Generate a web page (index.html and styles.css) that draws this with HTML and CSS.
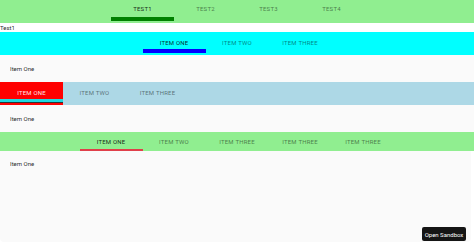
FILE: index.html
```html
<!DOCTYPE html>
<html lang="en">
  <head>
    <meta charset="UTF-8" />
    <meta name="viewport" content="width=device-width, initial-scale=1.0" />
    <title>Tabs</title>
    <link rel="stylesheet" href="styles.css">
  </head>
  <body>
    <div class="bar bar-one">
      <div class="tab selected"><span class="label">Test1</span><span class="indicator"></span></div>
      <div class="tab"><span class="label">Test2</span><span class="indicator"></span></div>
      <div class="tab"><span class="label">Test3</span><span class="indicator"></span></div>
      <div class="tab"><span class="label">Test4</span><span class="indicator"></span></div>
    </div>
    <p class="caption">Test1</p>

    <div class="bar bar-two">
      <div class="tab selected"><span class="label">Item One</span><span class="indicator"></span></div>
      <div class="tab"><span class="label">Item Two</span><span class="indicator"></span></div>
      <div class="tab"><span class="label">Item Three</span><span class="indicator"></span></div>
    </div>
    <div class="panel">Item One</div>

    <div class="bar bar-three">
      <div class="tab selected"><span class="label">Item One</span><span class="indicator"></span></div>
      <div class="tab"><span class="label">Item Two</span><span class="indicator"></span></div>
      <div class="tab"><span class="label">Item Three</span><span class="indicator"></span></div>
    </div>
    <div class="panel">Item One</div>

    <div class="bar bar-four">
      <div class="tab selected"><span class="label">Item One</span><span class="indicator"></span></div>
      <div class="tab"><span class="label">Item Two</span><span class="indicator"></span></div>
      <div class="tab"><span class="label">Item Three</span><span class="indicator"></span></div>
      <div class="tab"><span class="label">Item Three</span><span class="indicator"></span></div>
      <div class="tab"><span class="label">Item Three</span><span class="indicator"></span></div>
    </div>
    <div class="panel panel-last">Item One</div>

    <button class="sandbox">Open Sandbox</button>
  </body>
</html>
```

FILE: styles.css
```css
body {
  margin: 0;
  font-family: Roboto, "Liberation Sans", sans-serif;
  font-size: 6px;
  background: #ffffff;
  color: rgba(0, 0, 0, 0.87);
}
.bar {
  display: flex;
  height: 23px;
}
.bar-one {
  background: #90ee90;
  justify-content: center;
}
.bar-two {
  background: #00ffff;
  justify-content: center;
}
.bar-three {
  background: #add8e6;
}
.bar-four {
  background: #90ee90;
  justify-content: center;
  height: 19px;
}
.tab {
  width: 63px;
  display: flex;
  flex-direction: column;
  align-items: center;
  padding-top: 7px;
  box-sizing: border-box;
}
.label {
  display: block;
  line-height: 8px;
  height: 8px;
  text-transform: uppercase;
  font-weight: 400;
  letter-spacing: 0.2px;
  color: rgba(0, 0, 0, 0.5);
}
.tab.selected .label {
  color: rgba(0, 0, 0, 0.85);
}
.indicator {
  display: block;
  width: 100%;
  height: 4px;
  margin-top: 2px;
}
.bar-one .tab {
  padding-top: 5px;
}
.bar-one .indicator {
  margin-top: 4px;
}
.bar-one .selected .indicator {
  background: #008000;
}
.bar-two .selected .indicator {
  background: #0000ff;
}
.bar-three .selected {
  background: #ff0000;
}
.bar-three .selected .label {
  color: rgba(255, 255, 255, 0.9);
}
.bar-three .selected .indicator {
  height: 3px;
  background: #1fd8e0;
  border-bottom: 1px solid #333333;
}
.bar-four .tab {
  padding-top: 6px;
}
.bar-four .indicator {
  height: 2px;
  margin-top: 3px;
}
.bar-four .selected .indicator {
  background: #e0404a;
}
.caption {
  margin: 0;
  height: 9px;
  line-height: 9px;
}
.panel {
  background: #fafafa;
  padding: 10px 10px 9px;
  line-height: 8px;
  height: 8px;
}
.panel-last {
  padding: 9px 10px 74px;
  margin-right: 3px;
  border-radius: 0 0 4px 4px;
}
.sandbox {
  position: absolute;
  right: 8px;
  bottom: 7px;
  background: #151515;
  color: #ffffff;
  border: none;
  border-radius: 2px;
  font-family: Roboto, "Liberation Sans", sans-serif;
  font-size: 6px;
  width: 44px;
  height: 14px;
  padding: 0;
}
```
